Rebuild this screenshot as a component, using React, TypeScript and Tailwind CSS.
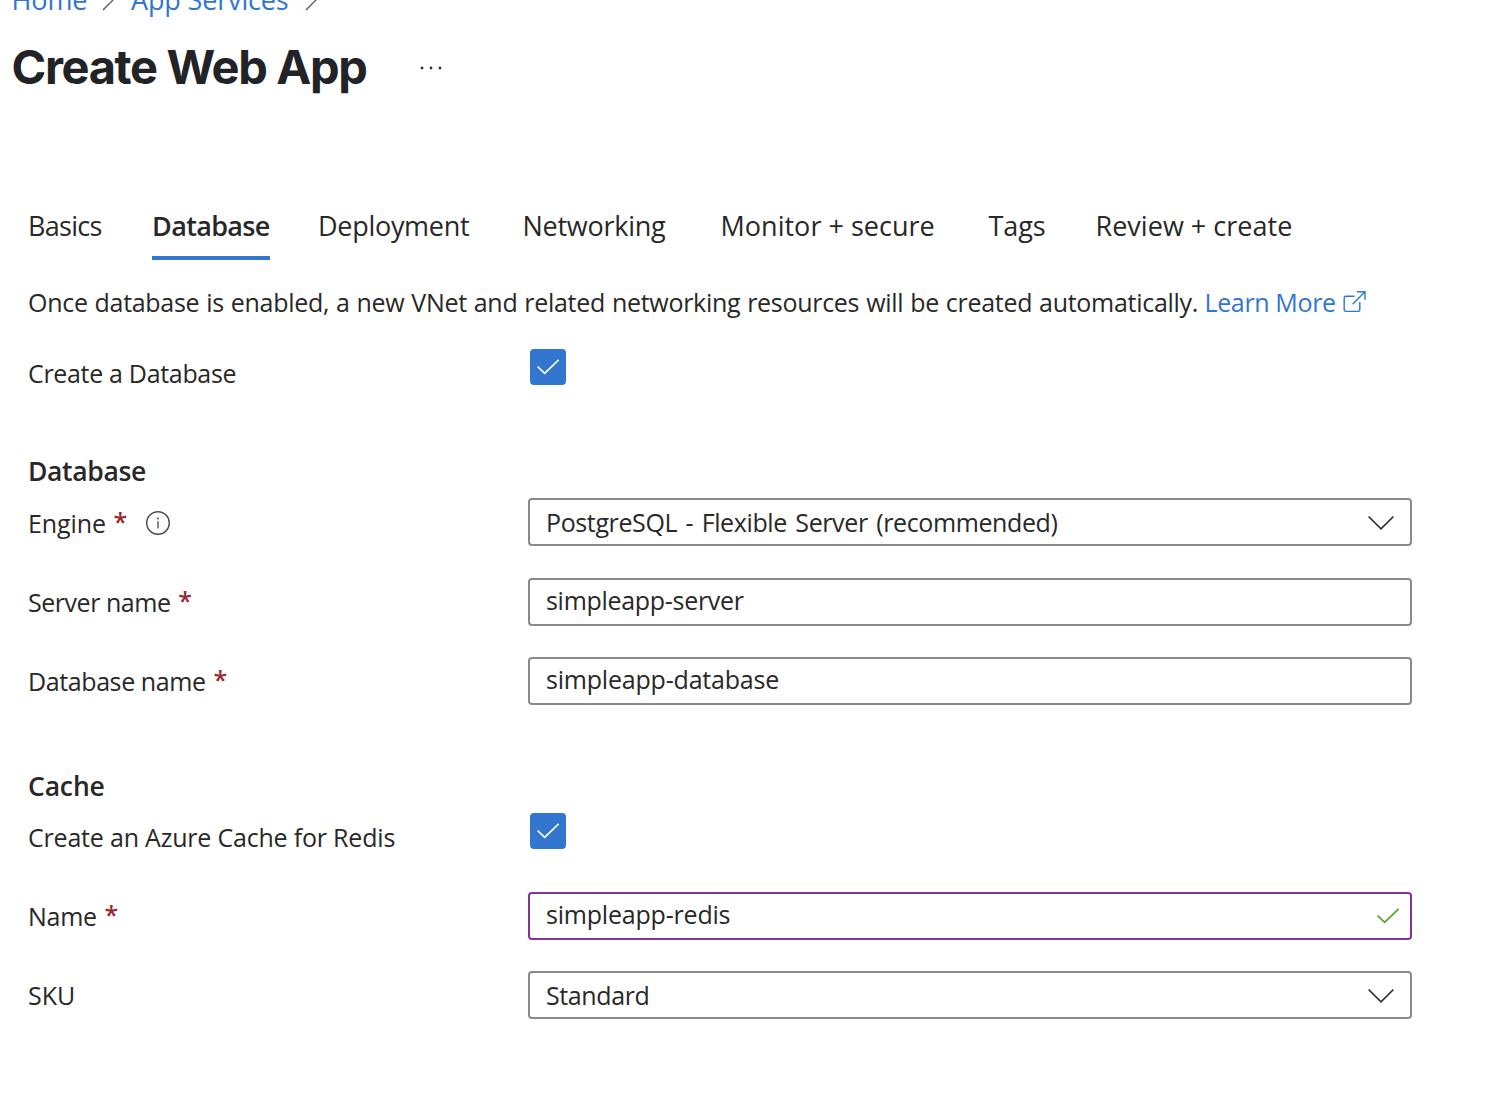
import React from "react";

const tabs = [
  { label: "Basics", cell: "w-[124px]", text: "tracking-[-0.71px]" },
  { label: "Database", cell: "w-[166px]", text: "tracking-[-0.65px]", active: true },
  { label: "Deployment", cell: "w-[204.5px]", text: "tracking-[-0.29px]" },
  { label: "Networking", cell: "w-[198px]", text: "tracking-[-0.26px]" },
  { label: "Monitor + secure", cell: "w-[268px]", text: "tracking-[0.02px]" },
  { label: "Tags", cell: "w-[107px]", text: "tracking-[-0.08px]" },
  { label: "Review + create", cell: "w-[220px]", text: "tracking-[0.02px]" },
];

function CrumbChevron({ className }: { className: string }) {
  return (
    <svg className={className} width="14" height="26" viewBox="0 0 14 26" fill="none" stroke="#605e5c" strokeWidth="1.4">
      <path d="M1 1 L13 13 L1 25" />
    </svg>
  );
}

function Check({ className }: { className: string }) {
  return (
    <svg className={className} width="24" height="18" viewBox="0 0 24 18" fill="none" stroke="currentColor" strokeWidth="1.7">
      <path d="M1.6 8.7 L8.7 15.4 L22.6 1.9" />
    </svg>
  );
}

function Checkbox() {
  return (
    <div className="ml-0.5 flex size-9 items-center justify-center rounded-[4px] bg-[#3276cf] text-white">
      <Check className="" />
    </div>
  );
}

function Row({ label, tracking, required, info, offset = "pt-1.5", className = "", children }: {
  label: string;
  tracking: string;
  required?: boolean;
  info?: boolean;
  offset?: string;
  className?: string;
  children: React.ReactNode;
}) {
  return (
    <div className={`flex items-start ${className}`}>
      <div className={`flex w-[500px] shrink-0 leading-9 ${offset}`}>
        <span className={tracking}>{label}</span>
        {required && <span className="-mt-0.5 ml-[7.7px] font-semibold text-[#962a2e]">*</span>}
        {info && (
          <svg className="ml-[17.3px] mt-[5px]" width="26" height="26" viewBox="0 0 26 26" fill="none">
            <circle cx="13" cy="13" r="11.3" stroke="#4c4a48" strokeWidth="1.4" />
            <path d="M13 11.2 V18.4" stroke="#605e5c" strokeWidth="1.5" />
            <circle cx="13" cy="8.4" r="1" fill="#605e5c" />
          </svg>
        )}
      </div>
      {children}
    </div>
  );
}

function Field({ value, tracking, select, valid }: { value: string; tracking: string; select?: boolean; valid?: boolean }) {
  return (
    <div
      className={`flex h-12 w-[884px] justify-between rounded-[4px] border-2 pl-4 leading-9 ${
        valid ? "border-[#8032a0] pr-2.5" : "border-[#8a8a8a] pr-4"
      } ${select ? "pt-1" : "pt-0.5"}`}
    >
      <span className={tracking}>{value}</span>
      {select && (
        <svg className="mt-[11px]" width="26" height="16" viewBox="0 0 26 16" fill="none" stroke="#323130" strokeWidth="1.7">
          <path d="M0.6 1.5 L13 13.9 L25.4 1.5" />
        </svg>
      )}
      {valid && <Check className="mt-[11px] text-[#5f9f28]" />}
    </div>
  );
}

export default function App() {
  return (
    <div className="h-[1104px] w-[1508px] overflow-hidden bg-white font-['Open_Sans',sans-serif] text-[25px] text-[#292827]">
      <nav className="-mt-[18px] flex h-9 pl-[11.5px] text-[27px] leading-9 text-[#3276cf]">
        <span className="w-[90.5px] tracking-[-0.1px]">Home</span>
        <CrumbChevron className="mt-[3px]" />
        <span className="ml-[15px] w-[174px] tracking-[-0.15px]">App Services</span>
        <CrumbChevron className="mt-[3px]" />
      </nav>

      <div className="mt-[21px] flex h-14 items-center pl-[11.5px]">
        <h1 className="w-[408.5px] font-[Inter] text-[47px] font-bold leading-14 tracking-[-1.35px] text-[#222327]">Create Web App</h1>
        <svg width="24" height="6" viewBox="0 0 24 6" fill="#323130">
          <circle cx="2" cy="4" r="1.4" />
          <circle cx="11" cy="4" r="1.4" />
          <circle cx="20" cy="4" r="1.4" />
        </svg>
      </div>

      <div className="mt-[113px] flex pl-7 text-[27px] leading-9">
        {tabs.map((t) => (
          <div key={t.label} className={`h-[52px] whitespace-nowrap ${t.cell}`}>
            <div className={`${t.text} ${t.active ? "h-[52px] w-[118px] border-b-4 border-[#3276cf] font-semibold" : ""}`}>{t.label}</div>
          </div>
        ))}
      </div>

      <main className="pl-7">
        <div className="mt-6 flex whitespace-nowrap leading-9">
          <span className="w-[1176.5px] tracking-[-0.29px] [word-spacing:0.7px]">
            Once database is enabled, a new VNet and related networking resources will be created automatically.
          </span>
          <span className="w-[137.5px] tracking-[-0.36px] text-[#3276cf]">Learn More</span>
          <svg className="mt-[6px]" width="24" height="24" viewBox="0 0 24 24" fill="none" stroke="#3276cf" strokeWidth="1.4">
            <path d="M12.5 6.3 H4 Q2.2 6.3 2.2 8.1 V19.6 Q2.2 21.4 4 21.4 H16 Q17.8 21.4 17.8 19.6 V12" />
            <path d="M15 1.8 H23 V9.8 M23 1.8 L10.6 14.2" />
          </svg>
        </div>

        <Row label="Create a Database" tracking="tracking-[-0.32px]" className="mt-[29px]">
          <Checkbox />
        </Row>

        <h2 className="mt-[62px] text-[26.5px] font-semibold leading-9 tracking-[-0.35px]">Database</h2>
        <Row label="Engine" tracking="tracking-[-0.1px]" required info offset="pt-[7px]" className="mt-[9px]">
          <Field value="PostgreSQL - Flexible Server (recommended)" tracking="tracking-[-0.38px] [word-spacing:2.3px]" select />
        </Row>
        <Row label="Server name" tracking="tracking-[-0.46px]" required className="mt-8">
          <Field value="simpleapp-server" tracking="tracking-[-0.3px]" />
        </Row>
        <Row label="Database name" tracking="tracking-[-0.4px]" required className="mt-[31px]">
          <Field value="simpleapp-database" tracking="tracking-[-0.2px]" />
        </Row>

        <h2 className="mt-[63px] text-[26.5px] font-semibold leading-9 tracking-[-0.15px]">Cache</h2>
        <Row label="Create an Azure Cache for Redis" tracking="tracking-[-0.2px]" className="mt-[9px]">
          <Checkbox />
        </Row>
        <Row label="Name" tracking="tracking-[-0.29px]" required className="mt-[37px]">
          <Field value="simpleapp-redis" tracking="tracking-[-0.2px]" valid />
        </Row>
        <Row label="SKU" tracking="" className="mt-[31px]">
          <Field value="Standard" tracking="tracking-[-0.39px]" select />
        </Row>
      </main>
    </div>
  );
}
